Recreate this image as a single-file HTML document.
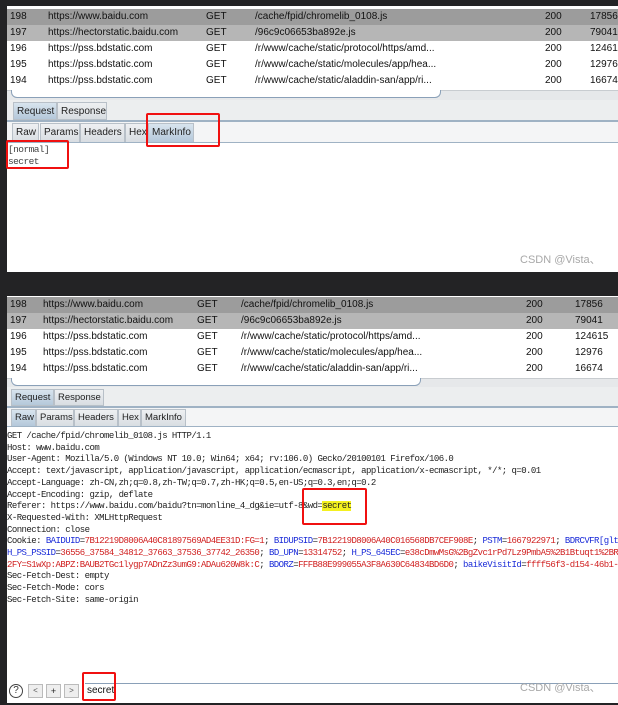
<!DOCTYPE html>
<html><head><meta charset="utf-8"><style>
*{margin:0;padding:0;box-sizing:border-box}
body{width:618px;height:705px;background:#232325;position:relative;overflow:hidden;font-family:"Liberation Sans",Arial,sans-serif}
.p{position:absolute;background:#fff;overflow:hidden}
.a{position:absolute;white-space:nowrap}
.row{position:absolute;left:0;width:618px;font-size:10px;color:#111}
.row span{position:absolute;top:2px}
.tab{position:absolute;border:1px solid #b8c0c8;background:linear-gradient(#eef0f2,#d8dde2);font-size:10px;color:#222;padding:3px 3px 0 3px}
.tab.sel{background:linear-gradient(#d8e4ee,#b4c8da)}
.mono{font-family:"Liberation Mono",monospace;font-size:9px;letter-spacing:-0.55px;color:#222;line-height:11.7px}
.red{position:absolute;border:2px solid #f01010;border-radius:2px}
.blue{color:#1a2bd8}.rd{color:#d02020}
</style></head><body>

<!-- top panel -->
<div class="p" style="left:7px;top:6px;width:611px;height:266px">
 <div class="row" style="top:3px;height:16px;background:#9c9c9c"><span style="left:3px">198</span><span style="left:41px">https://www.baidu.com</span><span style="left:199px">GET</span><span style="left:248px">/cache/fpid/chromelib_0108.js</span><span style="left:538px">200</span><span style="left:583px">17856</span></div>
 <div class="row" style="top:19px;height:16px;background:#b6b6b6"><span style="left:3px">197</span><span style="left:41px">https://hectorstatic.baidu.com</span><span style="left:199px">GET</span><span style="left:248px">/96c9c06653ba892e.js</span><span style="left:538px">200</span><span style="left:583px">79041</span></div>
 <div class="row" style="top:35px;height:16px"><span style="left:3px">196</span><span style="left:41px">https://pss.bdstatic.com</span><span style="left:199px">GET</span><span style="left:248px">/r/www/cache/static/protocol/https/amd...</span><span style="left:538px">200</span><span style="left:583px">124615</span></div>
 <div class="row" style="top:51px;height:16px"><span style="left:3px">195</span><span style="left:41px">https://pss.bdstatic.com</span><span style="left:199px">GET</span><span style="left:248px">/r/www/cache/static/molecules/app/hea...</span><span style="left:538px">200</span><span style="left:583px">12976</span></div>
 <div class="row" style="top:67px;height:16px"><span style="left:3px">194</span><span style="left:41px">https://pss.bdstatic.com</span><span style="left:199px">GET</span><span style="left:248px">/r/www/cache/static/aladdin-san/app/ri...</span><span style="left:538px">200</span><span style="left:583px">16674</span></div>
 <div class="a" style="left:0;top:84px;width:611px;height:10px;background:#e6e8ea;border-top:1px solid #c8ccd0"></div>
 <div class="a" style="left:4px;top:84px;width:430px;height:8px;border:1px solid #8aa0b8;border-top:none;border-radius:0 0 6px 6px;background:#fff"></div>
 <div class="a" style="left:0;top:94px;width:611px;height:22px;background:#eceeef"></div>
 <div class="tab sel" style="left:6px;top:96px;width:44px;height:18px">Request</div>
 <div class="tab" style="left:50px;top:96px;width:50px;height:18px">Response</div>
 <div class="a" style="left:0;top:114px;width:611px;height:2px;background:#9fb2c4"></div>
 <div class="a" style="left:0;top:116px;width:611px;height:21px;background:#f4f5f6"></div>
 <div class="tab" style="left:5px;top:117px;width:27px;height:20px">Raw</div>
 <div class="tab" style="left:33px;top:117px;width:40px;height:20px">Params</div>
 <div class="tab" style="left:73px;top:117px;width:45px;height:20px">Headers</div>
 <div class="tab" style="left:118px;top:117px;width:23px;height:20px">Hex</div>
 <div class="tab sel" style="left:141px;top:117px;width:46px;height:20px">MarkInfo</div>
 <div class="a" style="left:0;top:136px;width:611px;height:1px;background:#9fb2c4"></div>
 <div class="a mono" style="left:1px;top:138px;color:#444;font-size:9.5px">[normal]<br>secret</div>
 <div class="a" style="left:513px;top:245px;font-size:11px;color:#a8a8a8">CSDN @Vista、</div>
</div>
<div class="red" style="left:146px;top:113px;width:74px;height:34px"></div>
<div class="red" style="left:6px;top:140px;width:63px;height:29px"></div>

<!-- bottom panel -->
<div class="p" style="left:7px;top:296px;width:611px;height:407px">
 <div class="row" style="top:1px;height:16px;background:#9c9c9c"><span style="left:3px">198</span><span style="left:36px">https://www.baidu.com</span><span style="left:190px">GET</span><span style="left:234px">/cache/fpid/chromelib_0108.js</span><span style="left:519px">200</span><span style="left:568px">17856</span></div>
 <div class="row" style="top:17px;height:16px;background:#b6b6b6"><span style="left:3px">197</span><span style="left:36px">https://hectorstatic.baidu.com</span><span style="left:190px">GET</span><span style="left:234px">/96c9c06653ba892e.js</span><span style="left:519px">200</span><span style="left:568px">79041</span></div>
 <div class="row" style="top:33px;height:16px"><span style="left:3px">196</span><span style="left:36px">https://pss.bdstatic.com</span><span style="left:190px">GET</span><span style="left:234px">/r/www/cache/static/protocol/https/amd...</span><span style="left:519px">200</span><span style="left:568px">124615</span></div>
 <div class="row" style="top:49px;height:16px"><span style="left:3px">195</span><span style="left:36px">https://pss.bdstatic.com</span><span style="left:190px">GET</span><span style="left:234px">/r/www/cache/static/molecules/app/hea...</span><span style="left:519px">200</span><span style="left:568px">12976</span></div>
 <div class="row" style="top:65px;height:16px"><span style="left:3px">194</span><span style="left:36px">https://pss.bdstatic.com</span><span style="left:190px">GET</span><span style="left:234px">/r/www/cache/static/aladdin-san/app/ri...</span><span style="left:519px">200</span><span style="left:568px">16674</span></div>
 <div class="a" style="left:0;top:82px;width:611px;height:9px;background:#e6e8ea;border-top:1px solid #c8ccd0"></div>
 <div class="a" style="left:4px;top:82px;width:410px;height:8px;border:1px solid #8aa0b8;border-top:none;border-radius:0 0 6px 6px;background:#fff"></div>
 <div class="a" style="left:0;top:91px;width:611px;height:20px;background:#eceeef"></div>
 <div class="tab sel" style="left:4px;top:93px;width:43px;height:17px;font-size:9.5px;padding-top:2px">Request</div>
 <div class="tab" style="left:47px;top:93px;width:50px;height:17px;font-size:9.5px;padding-top:2px">Response</div>
 <div class="a" style="left:0;top:110px;width:611px;height:2px;background:#9fb2c4"></div>
 <div class="a" style="left:0;top:112px;width:611px;height:19px;background:#f4f5f6"></div>
 <div class="tab sel" style="left:4px;top:113px;width:25px;height:18px;font-size:9.5px;padding-top:2px">Raw</div>
 <div class="tab" style="left:29px;top:113px;width:38px;height:18px;font-size:9.5px;padding-top:2px">Params</div>
 <div class="tab" style="left:67px;top:113px;width:44px;height:18px;font-size:9.5px;padding-top:2px">Headers</div>
 <div class="tab" style="left:111px;top:113px;width:23px;height:18px;font-size:9.5px;padding-top:2px">Hex</div>
 <div class="tab" style="left:134px;top:113px;width:45px;height:18px;font-size:9.5px;padding-top:2px">MarkInfo</div>
 <div class="a" style="left:0;top:130px;width:611px;height:1px;background:#9fb2c4"></div>
 <div class="a mono" style="left:0;top:135px">GET /cache/fpid/chromelib_0108.js HTTP/1.1<br>Host: www.baidu.com<br>User-Agent: Mozilla/5.0 (Windows NT 10.0; Win64; x64; rv:106.0) Gecko/20100101 Firefox/106.0<br>Accept: text/javascript, application/javascript, application/ecmascript, application/x-ecmascript, */*; q=0.01<br>Accept-Language: zh-CN,zh;q=0.8,zh-TW;q=0.7,zh-HK;q=0.5,en-US;q=0.3,en;q=0.2<br>Accept-Encoding: gzip, deflate<br>Referer: https://www.baidu.com/baidu?tn=monline_4_dg&amp;ie=utf-8&amp;wd=<span style="background:#f4f020">secret</span><br>X-Requested-With: XMLHttpRequest<br>Connection: close<br>Cookie: <span class="blue">BAIDUID</span>=<span class="rd">7B12219D8006A40C81897569AD4EE31D:FG=1</span>; <span class="blue">BIDUPSID</span>=<span class="rd">7B12219D8006A40C016568DB7CEF908E</span>; <span class="blue">PSTM</span>=<span class="rd">1667922971</span>; <span class="blue">BDRCVFR[gltLrB7qNCt]</span><br><span class="blue">H_PS_PSSID</span>=<span class="rd">36556_37584_34812_37663_37536_37742_26350</span>; <span class="blue">BD_UPN</span>=<span class="rd">13314752</span>; <span class="blue">H_PS_645EC</span>=<span class="rd">e38cDmwMsG%2BgZvc1rPd7Lz9PmbA5%2B1Btuqt1%2BR</span><br><span class="rd">2FY=S1wXp:ABPZ:BAUB2TGc1lygp7ADnZz3umG9:ADAu620W8k:C</span>; <span class="blue">BDORZ</span>=<span class="rd">FFFB88E999055A3F8A630C64834BD6D0</span>; <span class="blue">baikeVisitId</span>=<span class="rd">ffff56f3-d154-46b1-</span><br>Sec-Fetch-Dest: empty<br>Sec-Fetch-Mode: cors<br>Sec-Fetch-Site: same-origin</div>
 <div class="a" style="left:78px;top:387px;width:533px;height:1px;background:#8aa0b8"></div>
 <div class="a" style="left:2px;top:388px;width:14px;height:14px;border:1px solid #444;border-radius:50%;font-size:10px;text-align:center;line-height:12px;color:#333">?</div>
 <div class="a" style="left:21px;top:388px;width:15px;height:14px;border:1px solid #bbb;background:#eee;font-size:8px;text-align:center;line-height:12px;color:#555">&lt;</div>
 <div class="a" style="left:39px;top:388px;width:15px;height:14px;border:1px solid #bbb;background:#eee;font-size:9px;text-align:center;line-height:12px;color:#222">+</div>
 <div class="a" style="left:57px;top:388px;width:15px;height:14px;border:1px solid #bbb;background:#eee;font-size:8px;text-align:center;line-height:12px;color:#555">&gt;</div>
 <div class="a" style="left:80px;top:389px;font-size:10px;color:#111">secret</div>
 <div class="a" style="left:513px;top:383px;font-size:11px;color:#a8a8a8">CSDN @Vista、</div>
</div>
<div class="red" style="left:302px;top:488px;width:65px;height:37px"></div>
<div class="red" style="left:82px;top:672px;width:34px;height:29px"></div>
</body></html>
